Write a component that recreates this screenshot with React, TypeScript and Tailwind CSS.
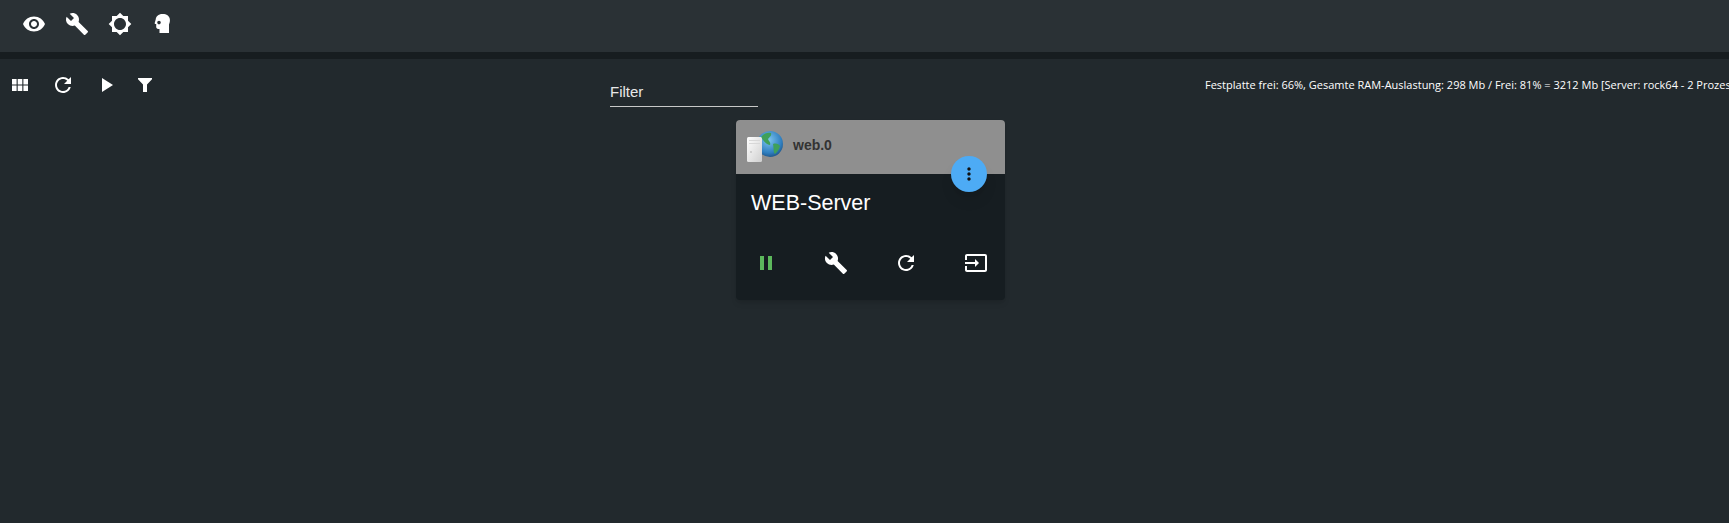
import { MdVisibility, MdBuild, MdBrightness5, MdRefresh, MdPlayArrow, MdMoreVert, MdPause, MdInput } from "react-icons/md";

function HeadIcon() {
  return (
    <svg viewBox="0 0 24 24" className="w-6 h-6 fill-white -ml-px">
      <path fillRule="evenodd" d="M12.500 2C8.200 2 5.800 4.600 5.700 7.600L4.700 11c-.2.4.1.9.5.9h1v3.200c0 1 .8 1.900 1.900 1.900h1.400v4h9.500V12.500c1.500-2.500 2.500-10.500-6.500-10.500zM9 8.800a1.800 1.800 0 1 0 0 3.600 1.800 1.800 0 0 0 0-3.600z" />
    </svg>
  );
}

function GridIcon() {
  return (
    <svg viewBox="0 0 16 12" className="w-4 h-3 fill-white">
      <rect x="0" y="0" width="4.600" height="5.500" />
      <rect x="5.700" y="0" width="4.600" height="5.500" />
      <rect x="11.400" y="0" width="4.600" height="5.500" />
      <rect x="0" y="6.500" width="4.600" height="5.500" />
      <rect x="5.700" y="6.500" width="4.600" height="5.500" />
      <rect x="11.400" y="6.500" width="4.600" height="5.500" />
    </svg>
  );
}

function FunnelIcon() {
  return (
    <svg viewBox="0 0 14 14" className="w-[14px] h-[14px] fill-white ml-5">
      <path d="M0 0h14v1.200L9 6.500V14H5V6.500L0 1.200z" />
    </svg>
  );
}

function WebIcon() {
  return (
    <svg viewBox="0 0 38 32" className="w-[38px] h-[32px]">
      <defs>
        <radialGradient id="globe" cx="45%" cy="35%" r="70%">
          <stop offset="0%" stopColor="#7cc4ee" />
          <stop offset="70%" stopColor="#2f7fc0" />
          <stop offset="100%" stopColor="#1d4f80" />
        </radialGradient>
        <linearGradient id="box" x1="0" y1="0" x2="1" y2="1">
          <stop offset="0%" stopColor="#ffffff" />
          <stop offset="100%" stopColor="#cfcfcf" />
        </linearGradient>
      </defs>
      <circle cx="24" cy="13" r="13" fill="url(#globe)" />
      <path d="M15 6c3-4 7-5 10-4 1 3-2 4-3 6 1 3 3 3 2 6-3 0-6-3-9-8zM27 13c3-1 6 0 7 2-1 4-3 6-5 8-2-2-1-6-2-10z" fill="#3fa05a" />
      <rect x="1" y="6" width="15" height="25" rx="1.500" fill="url(#box)" />
      <rect x="3" y="9" width="11" height="1" fill="#d8d8d8" />
      <rect x="3" y="12" width="11" height="1" fill="#d8d8d8" />
      <circle cx="5" cy="21" r="1" fill="#c4c4c4" />
    </svg>
  );
}

function Card() {
  return (
    <div className="relative w-[269px] h-[180px] rounded bg-[#161d21] shadow-md">
      <div className="h-[54px] rounded-t bg-[#8f8f8f] flex items-center pl-[10px]">
        <WebIcon />
        <span className="ml-[9px] mb-[3px] font-['Liberation_Sans',sans-serif] font-bold text-[14px] text-[#333]">web.0</span>
      </div>
      <button className="absolute right-[18px] top-[36px] w-9 h-9 rounded-full bg-[#4dabf5] shadow-lg flex items-center justify-center text-[#111]">
        <MdMoreVert className="w-5 h-5" />
      </button>
      <div className="pt-[15px] pl-[15px] text-[21.5px] leading-[29px] text-white font-['Liberation_Sans',sans-serif]">WEB-Server</div>
      <div className="flex justify-between items-center pl-[18px] pr-[17px] mt-[33px]">
        <MdPause className="w-6 h-6 text-[#5cb85c]" />
        <MdBuild className="w-6 h-6 text-white" />
        <MdRefresh className="w-6 h-6 text-white" />
        <MdInput className="w-6 h-6 text-white" />
      </div>
    </div>
  );
}

export default function App() {
  return (
    <div className="w-[1729px] h-[523px] overflow-hidden bg-[#22292d] text-white">
      <div className="h-[52px] bg-[#2a3135] flex items-center pl-[22px] gap-[19px] pb-[5px]">
        <MdVisibility className="w-6 h-6" />
        <MdBuild className="w-6 h-6" />
        <MdBrightness5 className="w-6 h-6" />
        <HeadIcon />
      </div>
      <div className="h-[7px] bg-[#171d20]" />
      <div className="flex items-start h-[60px] pt-[14px]">
        <div className="flex items-center w-[610px] h-[24px] pl-[12px]">
          <GridIcon />
          <MdRefresh className="w-6 h-6 ml-[23px]" />
          <MdPlayArrow className="w-6 h-6 ml-[19px]" />
          <FunnelIcon />
        </div>
        <div className="w-[148px] h-[34px] pt-[9px] border-b border-[#c8c8c8] text-[15px] leading-[20px] font-['Liberation_Sans',sans-serif] text-[#e8e8e8]">Filter</div>
        <div className="ml-[447px] mt-[4px] w-[524px] whitespace-nowrap overflow-hidden text-[11px] leading-[16px] text-white font-['Open_Sans',sans-serif]">
          Festplatte frei: 66%, Gesamte RAM-Auslastung: 298 Mb / Frei: 81% = 3212 Mb [Server: rock64 - 2 Prozesse]
        </div>
      </div>
      <div className="pl-[736px] pt-[1px]">
        <Card />
      </div>
    </div>
  );
}
